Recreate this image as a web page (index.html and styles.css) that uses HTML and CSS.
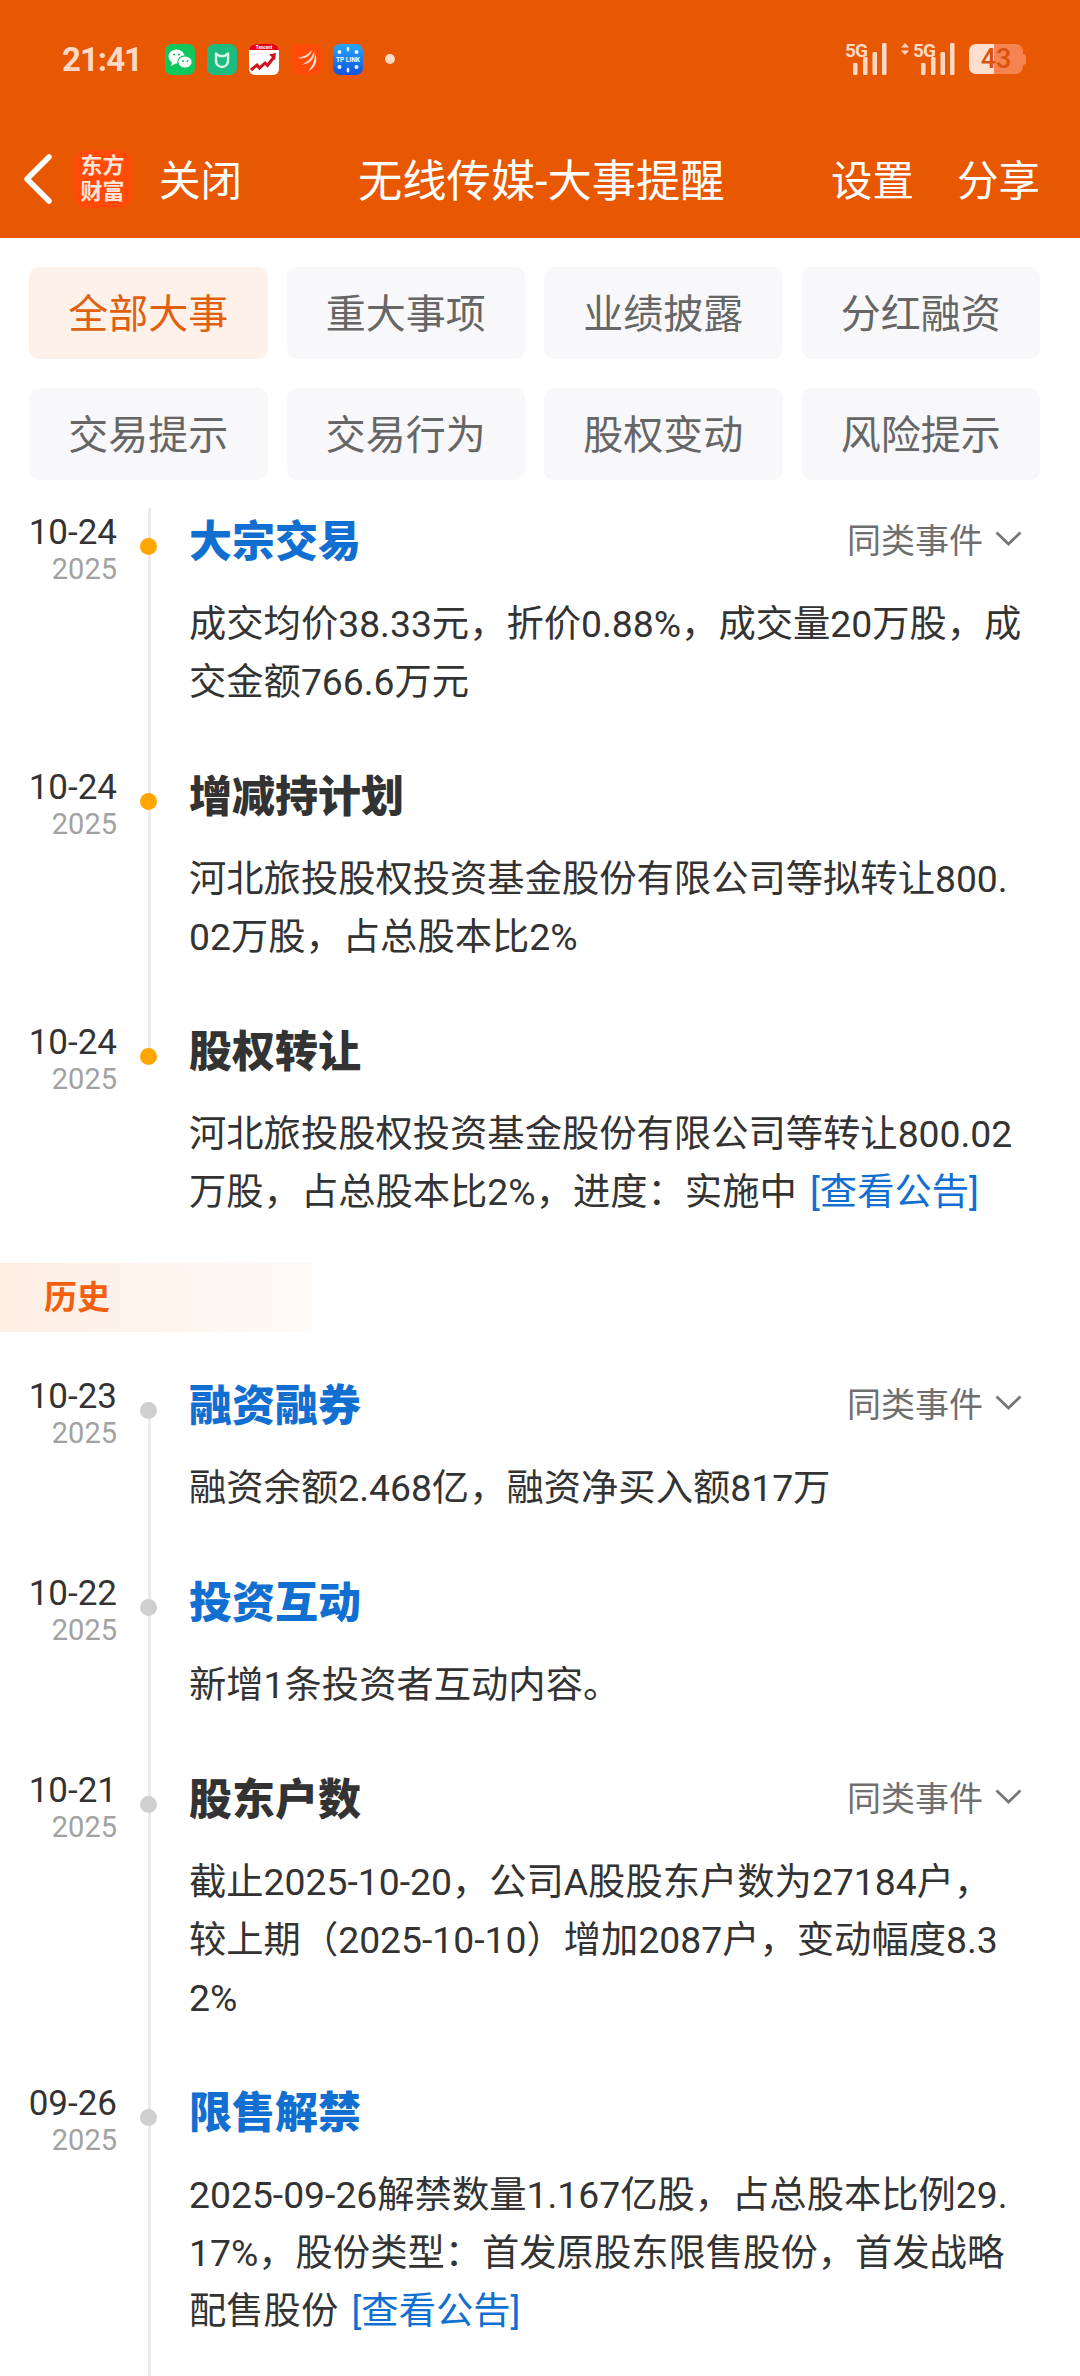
FILE: index.html
```html
<!DOCTYPE html>
<html lang="zh-CN">
<head>
<meta charset="utf-8">
<title>无线传媒-大事提醒</title>
<link rel="stylesheet" href="styles.css">
</head>
<body>
<header class="appbar">
  <div class="status">
    <span class="clock">21:41</span>
    <div class="notifs">
      <svg class="notif" viewBox="0 0 30 31"><rect width="30" height="31" rx="7" fill="#0fc75c"/><ellipse cx="11.5" cy="12.5" rx="8" ry="7" fill="#fff"/><path d="M7 18l-1 4 5-2.5z" fill="#fff"/><ellipse cx="20" cy="18" rx="7.2" ry="6.2" fill="#fff" stroke="#0fc75c" stroke-width="1.2"/><circle cx="9" cy="10.5" r="1.1" fill="#0fc75c"/><circle cx="14" cy="10.5" r="1.1" fill="#0fc75c"/><circle cx="18" cy="17" r="1" fill="#0fc75c"/><circle cx="22.5" cy="17" r="1" fill="#0fc75c"/></svg>
      <svg class="notif" viewBox="0 0 30 31"><rect width="30" height="31" rx="7" fill="#1dbb7f"/><path d="M9 9.5l3.500 2.500h5L21 9.500v7.500a6 6 0 0 1-12 0z" fill="none" stroke="#d8f6e8" stroke-width="2.400" stroke-linejoin="round"/></svg>
      <svg class="notif" viewBox="0 0 30 31"><rect width="30" height="31" rx="6" fill="#fff"/><path d="M0 6a6 6 0 0 1 6-6h18a6 6 0 0 1 6 6z" fill="#e60012"/><text class="tiny" x="15" y="4.800" text-anchor="middle">Tencent</text><path d="M2 26l6-5 2.500 3 5.500-5 2.500 2.500L25 13" fill="none" stroke="#d3101c" stroke-width="3"/><path d="M20 10.500l7-1.500-1 7z" fill="#d3101c"/></svg>
      <svg class="notif" viewBox="0 0 30 31"><rect width="30" height="31" rx="7" fill="#ff4a08"/><path d="M6 14c5-.5 11-3 15-8-.5 5-7 10-15 8zM10 21c5-2 11-6 13-14 1.500 6-3 13-13 14zM17 27c4-4 7-10 7-18 3 7 1 15-7 18z" fill="#ffe3d6"/></svg>
      <svg class="notif" viewBox="0 0 30 31"><defs><linearGradient id="tplink" x1="0" y1="0" x2="0" y2="1"><stop offset="0" stop-color="#23a8fb"/><stop offset="1" stop-color="#1551dc"/></linearGradient></defs><rect width="30" height="31" rx="7" fill="url(#tplink)"/><g fill="#dff2ff"><ellipse cx="15" cy="5" rx="1.400" ry="2.500"/><ellipse cx="15" cy="26" rx="1.400" ry="2.500"/><circle cx="6.500" cy="8" r="2"/><circle cx="23.500" cy="8" r="2"/><circle cx="6.500" cy="23" r="2"/><circle cx="23.500" cy="23" r="2"/></g><text class="tplink" x="15" y="18" text-anchor="middle">TP LINK</text></svg>
      <span class="notif-dot"></span>
    </div>
    <div class="sysicons">
      <svg class="signal" viewBox="0 0 42 32"><text class="fiveg" x="0" y="14">5G</text><g fill="#ffd9c6"><rect x="8" y="20" width="4.500" height="12" rx="1.200"/><rect x="18" y="14" width="4.500" height="18" rx="1.200"/><rect x="27.500" y="9" width="4.500" height="23" rx="1.200"/><rect x="37" y="0" width="4.500" height="32" rx="1.200"/></g></svg>
      <svg class="signal signal-wide" viewBox="0 0 54 32"><path d="M4 0l4 4.500H0zM4 12L0 7.500h8z" fill="#ffd9c6"/><text class="fiveg" x="12" y="14">5G</text><g fill="#ffd9c6"><rect x="20" y="20" width="4.500" height="12" rx="1.200"/><rect x="30" y="14" width="4.500" height="18" rx="1.200"/><rect x="39.500" y="9" width="4.500" height="23" rx="1.200"/><rect x="49" y="0" width="4.500" height="32" rx="1.200"/></g></svg>
      <div class="battery">
        <div class="battery-body">
          <span class="battery-level"></span>
          <span class="battery-num">43</span>
        </div>
      </div>
    </div>
  </div>
  <nav class="navbar">
    <svg class="back" viewBox="0 0 30 50"><path d="M26 3L4 25l22 22" fill="none" stroke="#fff" stroke-width="5.500" stroke-linecap="round" stroke-linejoin="round"/></svg>
    <span class="logo">东方<br>财富</span>
    <span class="nav-close">关闭</span>
    <h1 class="nav-title">无线传媒-大事提醒</h1>
    <span class="nav-action">设置</span>
    <span class="nav-action nav-share">分享</span>
  </nav>
</header>

<section class="chips">
  <span class="chip chip-on">全部大事</span>
  <span class="chip">重大事项</span>
  <span class="chip">业绩披露</span>
  <span class="chip">分红融资</span>
  <span class="chip">交易提示</span>
  <span class="chip">交易行为</span>
  <span class="chip">股权变动</span>
  <span class="chip">风险提示</span>
</section>

<main>
  <section class="timeline timeline-now">
    <article class="event">
      <div class="when"><b>10-24</b><i>2025</i></div>
      <div class="what">
        <span class="dot dot-now"></span>
        <div class="head"><h2 class="title link">大宗交易</h2><span class="same">同类事件<svg class="chev" viewBox="0 0 27 16"><path d="M1.500 2.500L13.500 14 25.500 2.500" fill="none" stroke="#777" stroke-width="2.800"/></svg></span></div>
        <p class="desc">成交均价38.33元，折价0.88%，成交量20万股，成<br>交金额766.6万元</p>
      </div>
    </article>
    <article class="event">
      <div class="when"><b>10-24</b><i>2025</i></div>
      <div class="what">
        <span class="dot dot-now"></span>
        <div class="head"><h2 class="title">增减持计划</h2></div>
        <p class="desc">河北旅投股权投资基金股份有限公司等拟转让800.<br>02万股，占总股本比2%</p>
      </div>
    </article>
    <article class="event event-last">
      <div class="when"><b>10-24</b><i>2025</i></div>
      <div class="what">
        <span class="dot dot-now"></span>
        <div class="head"><h2 class="title">股权转让</h2></div>
        <p class="desc">河北旅投股权投资基金股份有限公司等转让800.02<br>万股，占总股本比2%，进度：实施中 <a class="notice">[查看公告]</a></p>
      </div>
    </article>
  </section>

  <div class="history">历史</div>

  <section class="timeline timeline-past">
    <article class="event">
      <div class="when"><b>10-23</b><i>2025</i></div>
      <div class="what">
        <span class="dot"></span>
        <div class="head"><h2 class="title link">融资融券</h2><span class="same">同类事件<svg class="chev" viewBox="0 0 27 16"><path d="M1.500 2.500L13.500 14 25.500 2.500" fill="none" stroke="#777" stroke-width="2.800"/></svg></span></div>
        <p class="desc">融资余额2.468亿，融资净买入额817万</p>
      </div>
    </article>
    <article class="event">
      <div class="when"><b>10-22</b><i>2025</i></div>
      <div class="what">
        <span class="dot"></span>
        <div class="head"><h2 class="title link">投资互动</h2></div>
        <p class="desc">新增1条投资者互动内容。</p>
      </div>
    </article>
    <article class="event">
      <div class="when"><b>10-21</b><i>2025</i></div>
      <div class="what">
        <span class="dot"></span>
        <div class="head"><h2 class="title">股东户数</h2><span class="same">同类事件<svg class="chev" viewBox="0 0 27 16"><path d="M1.500 2.500L13.500 14 25.500 2.500" fill="none" stroke="#777" stroke-width="2.800"/></svg></span></div>
        <p class="desc">截止2025-10-20，公司A股股东户数为27184户，<br>较上期（2025-10-10）增加2087户，变动幅度8.3<br>2%</p>
      </div>
    </article>
    <article class="event">
      <div class="when"><b>09-26</b><i>2025</i></div>
      <div class="what">
        <span class="dot"></span>
        <div class="head"><h2 class="title link">限售解禁</h2></div>
        <p class="desc">2025-09-26解禁数量1.167亿股，占总股本比例29.<br>17%，股份类型：首发原股东限售股份，首发战略<br>配售股份 <a class="notice">[查看公告]</a></p>
      </div>
    </article>
  </section>
</main>
</body>
</html>
```
FILE: styles.css
```css
* { box-sizing: border-box; }

html, body {
  margin: 0;
  height: 2376px;
  overflow: hidden;
  background: #fff;
  font-family: Roboto, "Noto Sans CJK SC", sans-serif;
  color: #333;
}

/* top bar */
.appbar {
  height: 238px;
  background: #e85702;
  color: #fff;
}

.status {
  display: flex;
  align-items: center;
  height: 120px;
  padding: 0 54px 2px 62px;
}

.clock {
  font-size: 33px;
  font-weight: 700;
  letter-spacing: -1px;
  color: #ffd9c6;
  width: 103px;
}

.notifs {
  display: flex;
  align-items: center;
  gap: 12px;
}

.notif { width: 30px; height: 31px; display: block; }
.tiny { font: 700 4.500px Roboto, sans-serif; fill: #fff; }
.tplink { font: 700 6.500px Roboto, sans-serif; fill: #fff; }

.notif-dot {
  width: 10px;
  height: 10px;
  margin-left: 10px;
  border-radius: 50%;
  background: #ffd9c6;
}

.sysicons {
  display: flex;
  align-items: center;
  gap: 14px;
  margin-left: auto;
}

.signal { width: 42px; height: 32px; display: block; overflow: visible; }
.signal-wide { width: 54px; }
.fiveg { font: 700 19px Roboto, sans-serif; fill: #ffd9c6; letter-spacing: -1px; }

.battery {
  display: flex;
  align-items: center;
  width: 57px;
}

.battery::after {
  content: "";
  width: 3px;
  height: 11px;
  border-radius: 0 3px 3px 0;
  background: #f58450;
}

.battery-body {
  position: relative;
  width: 54px;
  height: 30px;
  border-radius: 7px;
  background: #f58450;
  overflow: hidden;
  text-align: center;
}

.battery-level {
  position: absolute;
  inset: 0 auto 0 0;
  width: 25px;
  background: #ffdfcf;
}

.battery-num {
  position: relative;
  font-size: 27px;
  font-weight: 500;
  line-height: 30px;
  color: #d9540a;
}

.navbar {
  display: flex;
  align-items: center;
  height: 118px;
  padding: 0 40px 0 23px;
  font-size: 41.500px;
}

.back { width: 30px; height: 50px; display: block; flex: none; }

.logo {
  width: 57px;
  height: 58px;
  margin-left: 21px;
  border-radius: 12px;
  background: #ff4a08;
  color: #ffe4d8;
  font-size: 22px;
  font-weight: 700;
  line-height: 26px;
  text-align: center;
  padding-top: 3px;
  flex: none;
}

.nav-close { margin: 0 0 3px 28px; }

.nav-title {
  margin: 0 0 3px 116px;
  font-size: 44.300px;
  font-weight: 400;
}

.nav-action { margin: 0 0 3px auto; }
.nav-share { margin-left: 43px; }

/* filter chips */
.chips {
  display: grid;
  grid-template-columns: repeat(4, 238.500px);
  grid-auto-rows: 92px;
  gap: 29px 19px;
  padding: 29px 0 0 29px;
}

.chip {
  display: flex;
  align-items: center;
  justify-content: center;
  padding-bottom: 4px;
  border-radius: 10px;
  background: #f8f8fa;
  color: #666;
  font-size: 40px;
}

.chip-on {
  background: #fdf1ea;
  color: #e0600f;
}

/* events */
.timeline { padding-top: 28px; }
.timeline-past { padding-top: 40px; }

.event {
  display: grid;
  grid-template-columns: 117px 1fr;
  column-gap: 31px;
}

.when {
  display: flex;
  flex-direction: column;
  align-items: flex-end;
}

.when b {
  font-size: 35px;
  font-weight: 400;
  line-height: 40px;
  margin-top: 5px;
  color: #333;
}

.when i {
  font-size: 29px;
  font-style: normal;
  line-height: 36px;
  margin-top: -2px;
  color: #a2a2a2;
}

.what {
  position: relative;
  border-left: 3px solid #ebebeb;
  padding: 0 58px 52px 38px;
}

/* the rail stops at the last dot of the upcoming group */
.event-last .what {
  padding-bottom: 42px;
  border-image: linear-gradient(#ebebeb 38px, transparent 38px) 1;
}

/* the past rail begins at its first dot */
.timeline-past .event:first-child .what {
  border-image: linear-gradient(transparent 38px, #ebebeb 38px) 1;
}

.dot {
  position: absolute;
  left: -11px;
  top: 30px;
  width: 17px;
  height: 17px;
  border-radius: 50%;
  background: #cfcfcf;
}

.dot-now { background: #ffa500; }

.head {
  display: flex;
  align-items: center;
  justify-content: space-between;
  height: 64px;
  padding-bottom: 4px;
}

.title {
  margin: 0;
  font-size: 43px;
  font-weight: 900;
  color: #333;
}

.title.link { color: #116fd2; }

.same {
  display: flex;
  align-items: center;
  gap: 12px;
  font-size: 34px;
  color: #6f6f6f;
}

.chev { width: 27px; height: 16px; display: block; }

.desc {
  margin: 23px 0 0;
  font-size: 37.300px;
  line-height: 58px;
  color: #333;
  white-space: nowrap;
}

.notice { margin-left: 4px; color: #116fd2; }

.history {
  width: 312px;
  height: 69px;
  padding-left: 44px;
  font-size: 33px;
  font-weight: 700;
  line-height: 70px;
  color: #f2600f;
  background: linear-gradient(90deg, #fdeee4, #fffaf7);
}
```
